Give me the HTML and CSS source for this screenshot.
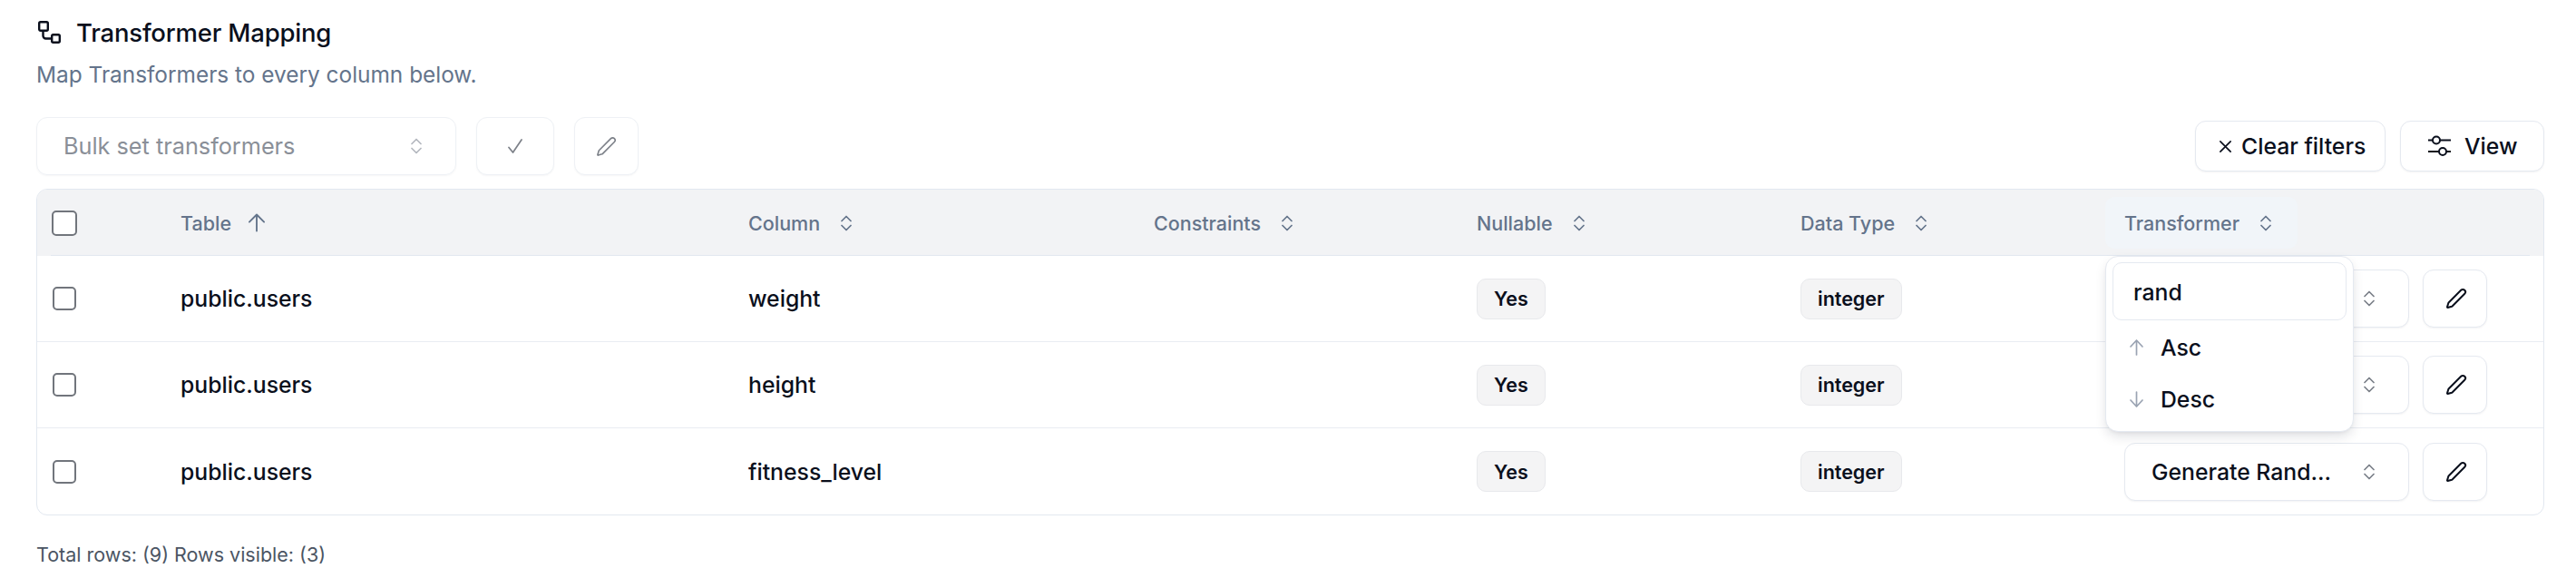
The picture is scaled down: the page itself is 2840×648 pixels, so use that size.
FILE: index.html
```html
<!DOCTYPE html>
<html lang="en">
<head>
<meta charset="utf-8">
<title>Transformer Mapping</title>
<link rel="stylesheet" href="styles.css">
</head>
<body>
<main class="page">
  <header class="heading">
    <div class="title-row">
      <svg class="title-icon" viewBox="0 0 28 28"><rect x="3.2" y="2.2" width="9.6" height="9.6" rx="1.5"/><rect x="17.2" y="16.2" width="8.6" height="8.6" rx="1.5"/><path d="M7.5 12v5.5a3 3 0 0 0 3 3h6.5"/></svg>
      <h1 class="title">Transformer Mapping</h1>
    </div>
    <p class="subtitle">Map Transformers to every column below.</p>
  </header>

  <div class="toolbar">
    <div class="toolbar-left">
      <div class="bulk-select">
        <span>Bulk set transformers</span>
        <svg class="chev chev-faint" viewBox="0 0 12 18"><path d="M1 6.5l5-5 5 5"/><path d="M1 11.5l5 5 5-5"/></svg>
      </div>
      <button class="tool-btn tool-check" type="button"><svg viewBox="0 0 16 16"><path d="M1 9.5 5.5 15 15 1"/></svg></button>
      <button class="tool-btn tool-pencil" type="button"><svg viewBox="0 0 24 24"><path d="M21.2 6.8a2.8 2.8 0 0 0-4-4L3.8 16.2a2 2 0 0 0-.5.8l-1.3 4.4a.5.5 0 0 0 .6.6l4.4-1.3a2 2 0 0 0 .8-.5z"/></svg></button>
    </div>
    <div class="toolbar-right">
      <button class="act-btn clear" type="button"><svg class="x-icon" viewBox="0 0 16 16"><path d="M2 2l12 12M14 2 2 14"/></svg>Clear filters</button>
      <button class="act-btn view" type="button"><svg class="view-icon" viewBox="0 0 25 24"><path d="M.5 5.5h4M13.5 5.5h11M.5 18h11M20.5 18h4"/><circle cx="9" cy="5.5" r="4"/><circle cx="16" cy="18" r="4"/></svg>View</button>
    </div>
  </div>

  <section class="table">
    <div class="row head">
      <div class="cell"><span class="checkbox checkbox-head"></span></div>
      <div class="cell cell-sorted"><span>Table</span><svg class="arrow" viewBox="0 0 20 22"><path d="m1 10 9-9 9 9M10 1v20"/></svg></div>
      <div class="cell"><span>Column</span><svg class="chev" viewBox="0 0 12 18"><path d="M1 6.5l5-5 5 5"/><path d="M1 11.5l5 5 5-5"/></svg></div>
      <div class="cell"><span>Constraints</span><svg class="chev" viewBox="0 0 12 18"><path d="M1 6.5l5-5 5 5"/><path d="M1 11.5l5 5 5-5"/></svg></div>
      <div class="cell"><span>Nullable</span><svg class="chev" viewBox="0 0 12 18"><path d="M1 6.5l5-5 5 5"/><path d="M1 11.5l5 5 5-5"/></svg></div>
      <div class="cell"><span>Data Type</span><svg class="chev" viewBox="0 0 12 18"><path d="M1 6.5l5-5 5 5"/><path d="M1 11.5l5 5 5-5"/></svg></div>
      <div class="cell"><span>Transformer</span><svg class="chev" viewBox="0 0 12 18"><path d="M1 6.5l5-5 5 5"/><path d="M1 11.5l5 5 5-5"/></svg></div>
    </div>

    <div class="row body">
      <div class="cell"><span class="checkbox"></span></div>
      <div class="cell">public.users</div>
      <div class="cell">weight</div>
      <div class="cell"></div>
      <div class="cell"><span class="badge">Yes</span></div>
      <div class="cell"><span class="badge">integer</span></div>
      <div class="cell actions">
        <div class="t-select"><span>Generate Rand...</span><svg class="chev chev-sel" viewBox="0 0 12 18"><path d="M1 6.5l5-5 5 5"/><path d="M1 11.5l5 5 5-5"/></svg></div>
        <button class="edit-btn" type="button"><svg viewBox="0 0 24 24"><path d="M21.2 6.8a2.8 2.8 0 0 0-4-4L3.8 16.2a2 2 0 0 0-.5.8l-1.3 4.4a.5.5 0 0 0 .6.6l4.4-1.3a2 2 0 0 0 .8-.5z"/></svg></button>
      </div>
    </div>

    <div class="row body">
      <div class="cell"><span class="checkbox"></span></div>
      <div class="cell">public.users</div>
      <div class="cell">height</div>
      <div class="cell"></div>
      <div class="cell"><span class="badge">Yes</span></div>
      <div class="cell"><span class="badge">integer</span></div>
      <div class="cell actions">
        <div class="t-select"><span>Generate Rand...</span><svg class="chev chev-sel" viewBox="0 0 12 18"><path d="M1 6.5l5-5 5 5"/><path d="M1 11.5l5 5 5-5"/></svg></div>
        <button class="edit-btn" type="button"><svg viewBox="0 0 24 24"><path d="M21.2 6.8a2.8 2.8 0 0 0-4-4L3.8 16.2a2 2 0 0 0-.5.8l-1.3 4.4a.5.5 0 0 0 .6.6l4.4-1.3a2 2 0 0 0 .8-.5z"/></svg></button>
      </div>
    </div>

    <div class="row body last">
      <div class="cell"><span class="checkbox"></span></div>
      <div class="cell">public.users</div>
      <div class="cell">fitness_level</div>
      <div class="cell"></div>
      <div class="cell"><span class="badge">Yes</span></div>
      <div class="cell"><span class="badge">integer</span></div>
      <div class="cell actions">
        <div class="t-select"><span>Generate Rand...</span><svg class="chev chev-sel" viewBox="0 0 12 18"><path d="M1 6.5l5-5 5 5"/><path d="M1 11.5l5 5 5-5"/></svg></div>
        <button class="edit-btn" type="button"><svg viewBox="0 0 24 24"><path d="M21.2 6.8a2.8 2.8 0 0 0-4-4L3.8 16.2a2 2 0 0 0-.5.8l-1.3 4.4a.5.5 0 0 0 .6.6l4.4-1.3a2 2 0 0 0 .8-.5z"/></svg></button>
      </div>
    </div>

    <div class="head-highlight"></div>
    <div class="popover">
      <div class="pop-input">rand</div>
      <div class="pop-item"><svg viewBox="0 0 15 18"><path d="M1 8l6.5-7L14 8M7.5 1v16"/></svg>Asc</div>
      <div class="pop-item"><svg viewBox="0 0 15 18"><path d="M1 10l6.5 7L14 10M7.5 1v16"/></svg>Desc</div>
    </div>
  </section>

  <p class="footer">Total rows: (9) Rows visible: (3)</p>
</main>
</body>
</html>
```
FILE: styles.css
```css
* { box-sizing: border-box; }
html, body { margin: 0; padding: 0; background: #fff; }
body { font-family: Inter, "Liberation Sans", sans-serif; color: #0a0f1c; }
svg { display: block; fill: none; stroke: currentColor; stroke-linecap: round; stroke-linejoin: round; }

.page { width: 2840px; height: 648px; padding: 18px 35px 0 40px; overflow: hidden; }

.heading { height: 111px; }
.title-row { display: flex; align-items: center; gap: 16px; height: 36px; }
.title-icon { width: 28px; height: 28px; flex: none; stroke-width: 2.4; stroke-linecap: butt; color: #0a0f1c; }
.title { margin: 0; font-size: 27.5px; line-height: 36px; font-weight: 500; letter-spacing: -0.2px; }
.subtitle { margin: 11px 0 0; font-size: 24.4px; line-height: 34px; color: #64748b; }

.toolbar { display: flex; justify-content: space-between; align-items: center; height: 64px; }
.toolbar-left { display: flex; align-items: stretch; gap: 22px; height: 64px; }
.toolbar-right { display: flex; gap: 16px; height: 56px; }

.bulk-select {
  width: 463px; display: flex; align-items: center; justify-content: space-between;
  padding: 0 37px 0 29px; border: 1px solid #eef1f5; border-radius: 12px; font-size: 25.25px; color: #8a8f98;
  box-shadow: 0 1px 2px rgba(15, 23, 42, .04);
}
.chev { width: 12px; height: 18px; flex: none; stroke-width: 1.7; color: #64748b; }
.chev-faint { color: #b4b8bf; }
.tool-btn {
  display: flex; align-items: center; justify-content: center; padding: 0; background: #fff;
  border: 1px solid #eef1f5; border-radius: 12px; color: #7c8088;
  box-shadow: 0 1px 2px rgba(15, 23, 42, .04);
}
.tool-check { width: 86px; }
.tool-pencil { width: 71px; }
.tool-btn svg { stroke-width: 1.7; }
.tool-check svg { width: 16px; height: 16px; }
.tool-pencil svg { width: 23px; height: 23px; }

.act-btn {
  display: flex; align-items: center; background: #fff; border: 1px solid #e5e9f0; border-radius: 12px;
  font: 500 24.75px Inter, "Liberation Sans", sans-serif; color: #0a0f1c; padding: 0;
  box-shadow: 0 1px 2px rgba(15, 23, 42, .05);
}
.clear { width: 210px; padding-left: 25px; gap: 10px; }
.x-icon { width: 15px; height: 15px; stroke-width: 1.8; }
.view { width: 159px; padding-left: 30px; gap: 15px; }
.view-icon { width: 25px; height: 24px; stroke-width: 2; }

.table {
  position: relative; border: 1px solid #e2e8f0; border-radius: 12px; margin-top: 15px;
}
.row { display: grid; grid-template-columns: 158px 626px 447px 356px 357px 357px 1fr; align-items: center; }
.head { position: relative; height: 73px; background: #f2f3f5; border-radius: 11px 11px 0 0; font-size: 21.5px; font-weight: 500; color: #64748b; }
.head::after { content: ""; position: absolute; left: 15px; right: 15px; bottom: 0; height: 1px; background: #e2e8f0; }
.body { height: 95px; font-size: 24.75px; font-weight: 450; border-bottom: 1px solid #e9edf2; }
.last { border-bottom: 0; }
.cell { display: flex; align-items: center; gap: 23px; position: relative; z-index: 1; }
.cell-sorted { gap: 19px; }
.cell:first-child { padding-left: 16px; }

.checkbox { display: block; width: 26px; height: 26px; margin-left: 1px; border: 2px solid #71757c; border-radius: 5px; background: #fff; }
.checkbox-head { width: 28px; height: 28px; margin-left: 0; }
.arrow { width: 18px; height: 21px; stroke-width: 2.1; color: #64748b; }

.badge {
  display: inline-flex; align-items: center; height: 45px; padding: 0 18px; background: #f4f4f5;
  border: 1px solid #e8e9ec; border-radius: 10px; font-size: 21.5px; font-weight: 600;
}
.actions { gap: 15px; }
.t-select {
  width: 314px; height: 64px; display: flex; align-items: center; justify-content: space-between;
  padding: 0 37px 0 29px; border: 1px solid #e5e9f0; border-radius: 12px; background: #fff;
  box-shadow: 0 1px 2px rgba(15, 23, 42, .05);
}
.chev-sel { color: #7a7f88; }
.edit-btn {
  width: 71px; height: 64px; display: flex; align-items: center; justify-content: center; padding: 0 0 0 3px;
  background: #fff; border: 1px solid #e5e9f0; border-radius: 12px; color: #0a0f1c;
  box-shadow: 0 1px 2px rgba(15, 23, 42, .05);
}
.edit-btn svg { width: 24px; height: 24px; stroke-width: 2; }

.head-highlight { position: absolute; left: 2280px; top: 8px; width: 212px; height: 57px; border-radius: 10px; background: #f1f5f9; z-index: 0; }
.popover {
  position: absolute; left: 2280px; top: 73px; width: 274px; height: 194px; z-index: 5; padding: 6px 7px 0;
  background: #fff; border: 1px solid #e5e9f0; border-radius: 14px; font-weight: 450;
  box-shadow: 0 6px 14px -2px rgba(15, 23, 42, .14), 0 2px 4px -2px rgba(15, 23, 42, .08);
}
.pop-input {
  height: 64px; display: flex; align-items: center; padding: 2px 0 0 22px; border: 1px solid #e5e9f0; border-radius: 10px;
  font-size: 24.75px; margin-bottom: 1px;
}
.pop-item { height: 57px; display: flex; align-items: center; gap: 19px; padding-left: 19px; font-size: 24.75px; }
.pop-item svg { width: 15px; height: 18px; flex: none; stroke-width: 1.7; color: #9aa3b2; }

.footer { margin: 29px 0 0; font-size: 21.5px; line-height: 28px; color: #4b5563; }
```
